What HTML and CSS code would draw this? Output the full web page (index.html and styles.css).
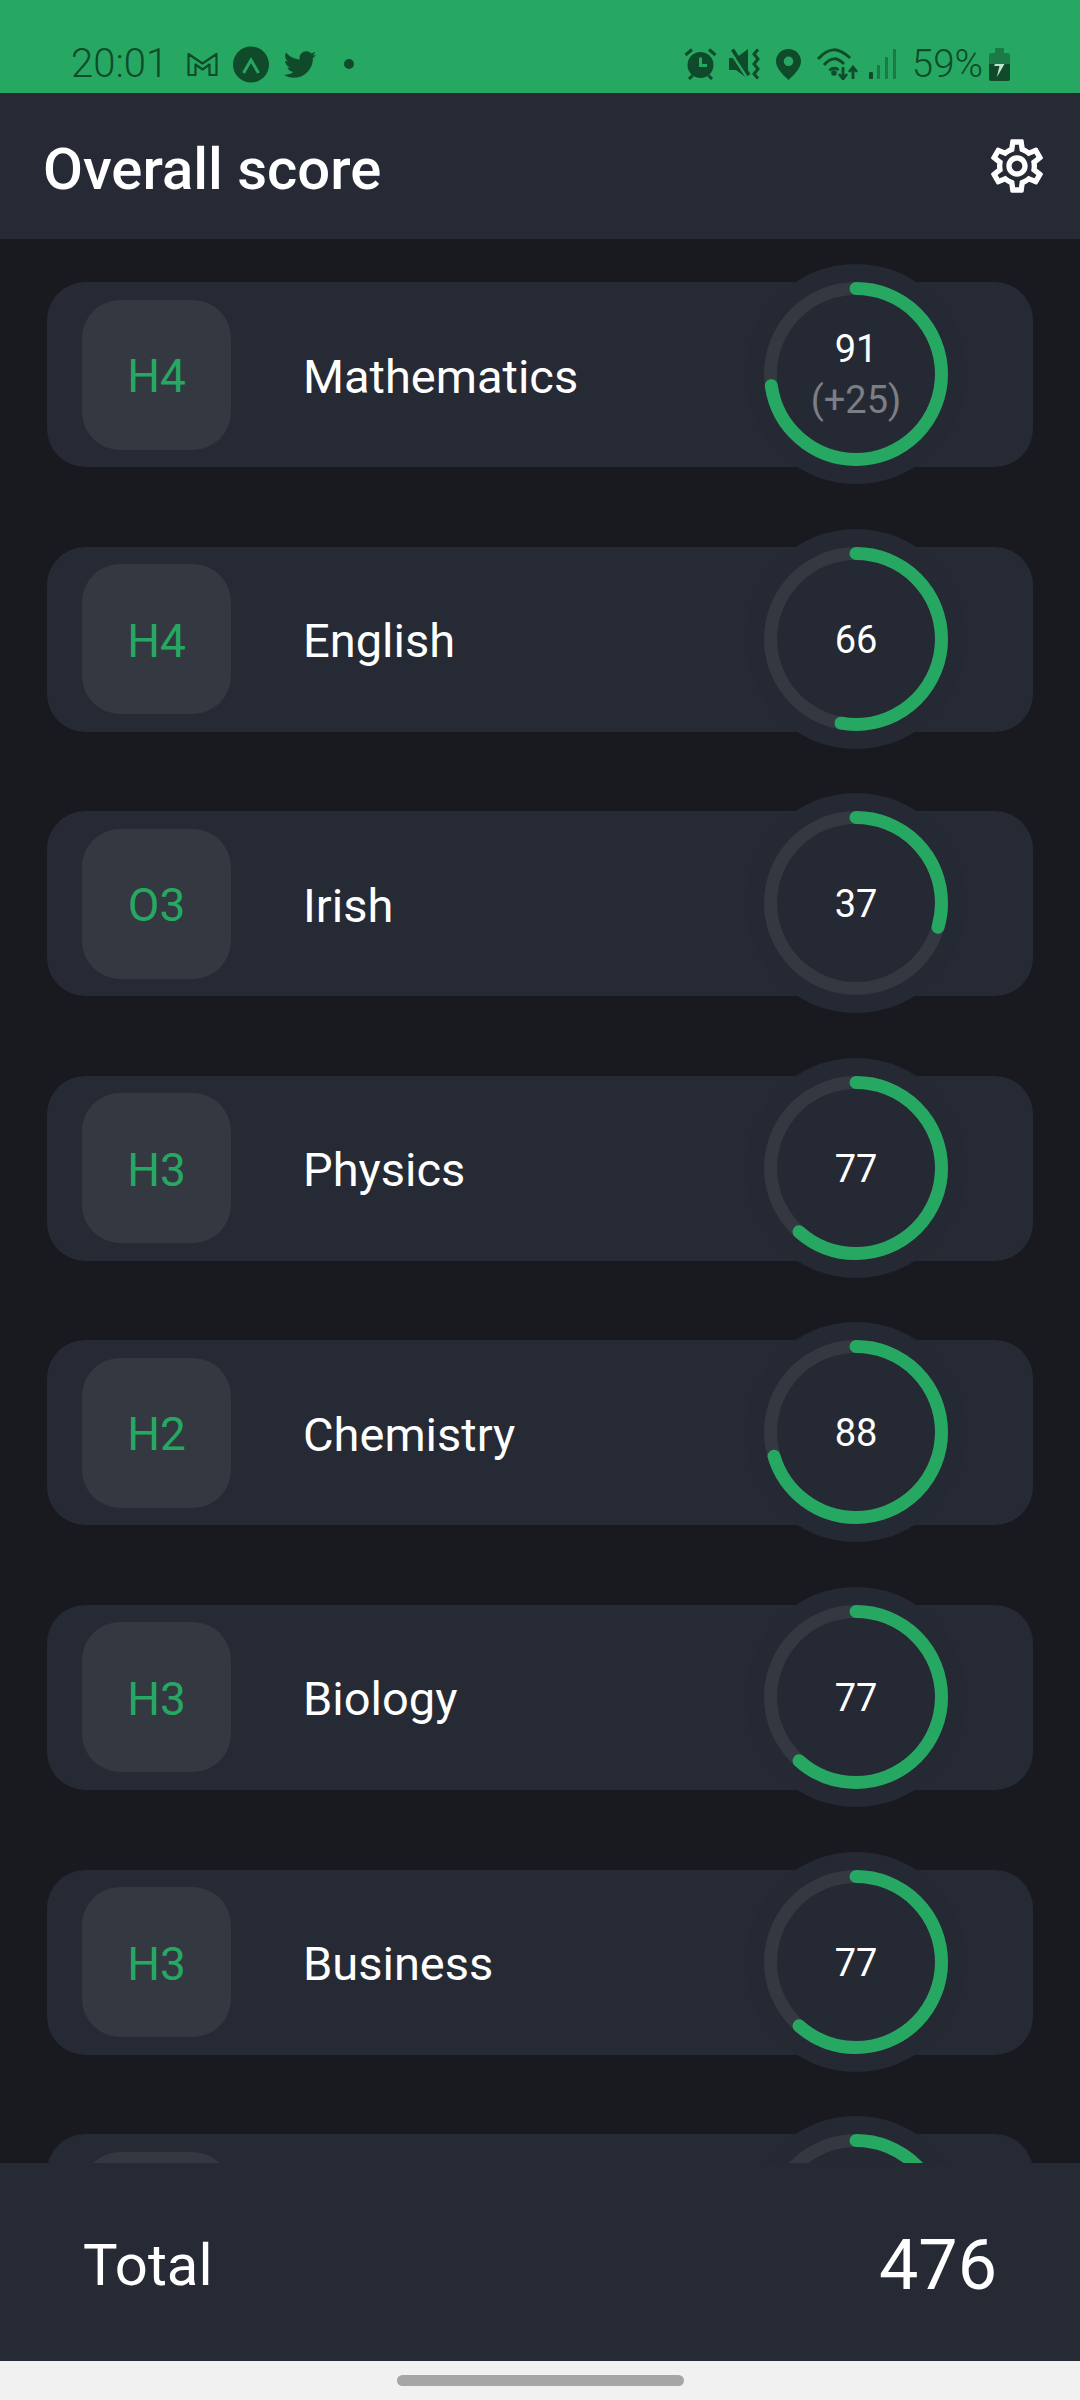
FILE: index.html
```html
<!DOCTYPE html>
<html lang="en">
<head>
    <meta charset="UTF-8">
    <meta name="viewport" content="width=device-width, initial-scale=1.0">
    <title>Overall score</title>
    <link rel="stylesheet" href="styles.css">
</head>
<body>
    <div class="status-bar">
        <div class="status-left">
            <span class="clock">20:01</span>
            <svg class="icon-mail" viewBox="0 0 31 25"><path d="M1.500 2 15.500 11.500 29.500 2V23H22.500V12.500L15.500 17.500 8.500 12.500V23H1.500Z" fill="none" stroke="#0f4a2a" stroke-width="2.200" stroke-linejoin="round"/></svg>
            <svg class="icon-expo" viewBox="0 0 36 37"><circle cx="18" cy="18.500" r="18" fill="#0f4a2a"/><path d="M10.500 27 18 14 25.500 27" fill="none" stroke="#27a862" stroke-width="3"/></svg>
            <svg class="icon-bird" viewBox="1 3.500 22 18"><path fill="#0f4a2a" d="M22.460 6c-.77.35-1.600.58-2.460.69.88-.53 1.560-1.370 1.880-2.380-.83.5-1.750.85-2.720 1.050C18.370 4.500 17.260 4 16 4c-2.350 0-4.270 1.920-4.270 4.290 0 .34.04.67.11.98C8.280 9.090 5.110 7.380 3 4.790c-.37.63-.58 1.370-.58 2.150 0 1.490.75 2.810 1.910 3.560-.71 0-1.370-.2-1.950-.5v.03c0 2.080 1.480 3.820 3.440 4.220a4.190 4.190 0 0 1-1.930.07 4.280 4.280 0 0 0 4 2.980 8.521 8.521 0 0 1-5.330 1.840c-.34 0-.68-.02-1.020-.06C3.440 20.290 5.700 21 8.120 21 16 21 20.330 14.460 20.330 8.790c0-.19 0-.37-.01-.56.84-.6 1.560-1.360 2.140-2.230z"/></svg>
            <span class="dot"></span>
        </div>
        <div class="status-right">
            <svg class="icon-alarm" viewBox="0 0 33 32">
                <circle cx="16.500" cy="17" r="13" fill="#0f4a2a"/>
                <path d="M16.500 9.500V17.500H23" fill="none" stroke="#27a862" stroke-width="3"/>
                <path d="M1.500 7 8 1.500M31.500 7 25 1.500M5 31 8.500 27.500M28 31 24.500 27.500" stroke="#0f4a2a" stroke-width="3" fill="none"/>
            </svg>
            <svg class="icon-mute" viewBox="0 0 32 32">
                <path d="M0 10H7L19 1V31L7 22H0Z" fill="#0f4a2a"/>
                <path d="M1.500 4 19 31" stroke="#27a862" stroke-width="2.500"/>
                <path d="M3.500 1.500 20 27" stroke="#0f4a2a" stroke-width="3.500"/>
                <path d="M29 1.500 25 6 29 11 25 16 29 21 25 26 29 30.500" fill="none" stroke="#0f4a2a" stroke-width="3"/>
            </svg>
            <svg class="icon-pin" viewBox="0 0 25 31"><path fill-rule="evenodd" fill="#0f4a2a" d="M12.500 0C5.600 0 0 5.500 0 12.300 0 19 6.500 25.500 12.500 31 18.500 25.500 25 19 25 12.300 25 5.500 19.400 0 12.500 0ZM12.500 7.500A4.800 4.800 0 1 1 12.500 17.100 4.800 4.800 0 1 1 12.500 7.500Z"/></svg>
            <svg class="icon-wifi" viewBox="0 0 43 32">
                <path d="M2 11C13 -1 22 -1 34 10M8 17C15 9 21 9 28 16M13.500 22.500C16 19.500 20 19.500 22.500 22" fill="none" stroke="#0f4a2a" stroke-width="3"/>
                <circle cx="18" cy="25" r="2.800" fill="#0f4a2a"/>
                <path d="M27 19V30M23 26 27 31 31 26" fill="none" stroke="#0f4a2a" stroke-width="2.800"/>
                <path d="M37 31V20M33 24 37 19 41 24" fill="none" stroke="#0f4a2a" stroke-width="2.800"/>
            </svg>
            <svg class="icon-signal" viewBox="0 0 28 30">
                <rect x="0" y="23" width="4" height="7" rx="1" fill="#0f4a2a"/>
                <rect x="8" y="16" width="3" height="14" rx="1" fill="#1c7a47"/>
                <rect x="16" y="8" width="3" height="22" rx="1" fill="#1c7a47"/>
                <rect x="24" y="0" width="3" height="30" rx="1" fill="#1c7a47"/>
            </svg>
            <span class="percent">59%</span>
            <svg class="icon-battery" viewBox="0 0 21 33">
                <path d="M6 0H15V5H19Q21 5 21 7V16H0V7Q0 5 2 5H6Z" fill="#1c7a47"/>
                <path d="M0 16H21V31Q21 33 19 33H2Q0 33 0 31Z" fill="#0f4a2a"/>
                <path d="M12 6 5.500 18H10.500L7.500 29 15 16H10Z" fill="#1c7a47"/>
                <path d="M6 16H15.500L8 29 10.500 18H5Z" fill="#bfe3cf"/>
            </svg>
        </div>
    </div>

    <div class="app-bar">
        <h1 class="title">Overall score</h1>
        <svg class="icon-gear" viewBox="0 0 24 24"><path fill="#fff" d="M19.430 12.980c.04-.32.07-.64.07-.98 0-.34-.03-.66-.07-.98l2.110-1.650c.19-.15.24-.42.12-.64l-2-3.460c-.09-.16-.26-.25-.44-.25-.06 0-.12.01-.17.03l-2.490 1c-.52-.4-1.080-.73-1.690-.98l-.38-2.650C14.460 2.180 14.250 2 14 2h-4c-.25 0-.46.18-.49.42l-.38 2.650c-.61.25-1.170.59-1.690.98l-2.490-1c-.06-.02-.12-.03-.18-.03-.17 0-.34.09-.43.25l-2 3.460c-.13.22-.07.49.12.64l2.110 1.650c-.04.32-.07.65-.07.98 0 .33.03.66.07.98l-2.110 1.650c-.19.15-.24.42-.12.64l2 3.460c.09.16.26.25.44.25.06 0 .12-.01.17-.03l2.490-1c.52.4 1.080.73 1.690.98l.38 2.650c.03.24.24.42.49.42h4c.25 0 .46-.18.49-.42l.38-2.650c.61-.25 1.170-.59 1.690-.98l2.490 1c.06.02.12.03.18.03.17 0 .34-.09.43-.25l2-3.460c.12-.22.07-.49-.12-.64l-2.110-1.650zm-1.980-1.710c.04.31.05.52.05.73 0 .21-.02.43-.05.73l-.14 1.130.89.7 1.080.84-.7 1.210-1.270-.51-1.040-.42-.9.68c-.43.32-.84.56-1.250.73l-1.060.43-.16 1.130-.2 1.350h-1.400l-.19-1.350-.16-1.130-1.060-.43c-.43-.18-.83-.41-1.230-.71l-.91-.7-1.060.43-1.270.51-.7-1.210 1.080-.84.89-.7-.14-1.130c-.03-.31-.05-.54-.05-.74s.02-.43.05-.73l.14-1.130-.89-.7-1.080-.84.7-1.210 1.270.51 1.040.42.9-.68c.43-.32.84-.56 1.250-.73l1.060-.43.16-1.130.2-1.350h1.390l.19 1.350.16 1.130 1.060.43c.43.18.83.41 1.230.71l.91.7 1.060-.43 1.270-.51.7 1.210-1.070.85-.89.7.14 1.130zM12 8c-2.210 0-4 1.790-4 4s1.790 4 4 4 4-1.790 4-4-1.790-4-4-4zm0 6c-1.100 0-2-.9-2-2s.9-2 2-2 2 .9 2 2-.9 2-2 2z"/></svg>
    </div>

    <div class="score-list">
        <div class="score-card">
            <div class="grade">H4</div>
            <div class="subject">Mathematics</div>
            <div class="ring">
                <svg class="ring-svg" viewBox="0 0 220 220">
                    <circle class="ring-track" cx="110" cy="110" r="85.500"/>
                    <circle class="ring-value" cx="110" cy="110" r="85.500" pathLength="125" stroke-dasharray="91 125"/>
                </svg>
                <span class="points">91</span>
                <span class="bonus">(+25)</span>
            </div>
        </div>
        <div class="score-card">
            <div class="grade">H4</div>
            <div class="subject">English</div>
            <div class="ring">
                <svg class="ring-svg" viewBox="0 0 220 220">
                    <circle class="ring-track" cx="110" cy="110" r="85.500"/>
                    <circle class="ring-value" cx="110" cy="110" r="85.500" pathLength="125" stroke-dasharray="66 125"/>
                </svg>
                <span class="points">66</span>
            </div>
        </div>
        <div class="score-card">
            <div class="grade">O3</div>
            <div class="subject">Irish</div>
            <div class="ring">
                <svg class="ring-svg" viewBox="0 0 220 220">
                    <circle class="ring-track" cx="110" cy="110" r="85.500"/>
                    <circle class="ring-value" cx="110" cy="110" r="85.500" pathLength="125" stroke-dasharray="37 125"/>
                </svg>
                <span class="points">37</span>
            </div>
        </div>
        <div class="score-card">
            <div class="grade">H3</div>
            <div class="subject">Physics</div>
            <div class="ring">
                <svg class="ring-svg" viewBox="0 0 220 220">
                    <circle class="ring-track" cx="110" cy="110" r="85.500"/>
                    <circle class="ring-value" cx="110" cy="110" r="85.500" pathLength="125" stroke-dasharray="77 125"/>
                </svg>
                <span class="points">77</span>
            </div>
        </div>
        <div class="score-card">
            <div class="grade">H2</div>
            <div class="subject">Chemistry</div>
            <div class="ring">
                <svg class="ring-svg" viewBox="0 0 220 220">
                    <circle class="ring-track" cx="110" cy="110" r="85.500"/>
                    <circle class="ring-value" cx="110" cy="110" r="85.500" pathLength="125" stroke-dasharray="88 125"/>
                </svg>
                <span class="points">88</span>
            </div>
        </div>
        <div class="score-card">
            <div class="grade">H3</div>
            <div class="subject">Biology</div>
            <div class="ring">
                <svg class="ring-svg" viewBox="0 0 220 220">
                    <circle class="ring-track" cx="110" cy="110" r="85.500"/>
                    <circle class="ring-value" cx="110" cy="110" r="85.500" pathLength="125" stroke-dasharray="77 125"/>
                </svg>
                <span class="points">77</span>
            </div>
        </div>
        <div class="score-card">
            <div class="grade">H3</div>
            <div class="subject">Business</div>
            <div class="ring">
                <svg class="ring-svg" viewBox="0 0 220 220">
                    <circle class="ring-track" cx="110" cy="110" r="85.500"/>
                    <circle class="ring-value" cx="110" cy="110" r="85.500" pathLength="125" stroke-dasharray="77 125"/>
                </svg>
                <span class="points">77</span>
            </div>
        </div>
        <!-- eighth card is cut off by the footer, only its top shows -->
        <div class="score-card">
            <div class="grade"></div>
            <div class="subject"></div>
            <div class="ring">
                <svg class="ring-svg" viewBox="0 0 220 220">
                    <circle class="ring-track" cx="110" cy="110" r="85.500"/>
                    <circle class="ring-value" cx="110" cy="110" r="85.500" pathLength="125" stroke-dasharray="60 125"/>
                </svg>
            </div>
        </div>
    </div>

    <div class="total-bar">
        <span class="total-label">Total</span>
        <span class="total-value">476</span>
    </div>

    <div class="nav-bar">
        <div class="nav-handle"></div>
    </div>
</body>
</html>
```

FILE: styles.css
```css
html, body {
    margin: 0;
    padding: 0;
}
body {
    width: 1080px;
    height: 2400px;
    display: flex;
    flex-direction: column;
    overflow: hidden;
    font-family: Roboto, "Noto Sans", sans-serif;
    background-color: #191a1f;
    color: #fff;
}

/* status bar */
.status-bar {
    height: 93px;
    flex-shrink: 0;
    box-sizing: border-box;
    padding: 46px 70px 0 71px;
    display: flex;
    justify-content: space-between;
    background-color: #27a862;
    color: #0f4a2a;
}
.status-left, .status-right {
    height: 36px;
    display: flex;
    align-items: center;
}
.clock {
    font-size: 40px;
    line-height: 36px;
    font-weight: 300;
}
.percent {
    margin-left: 15px;
    font-size: 38.5px;
    line-height: 36px;
    font-weight: 300;
}
.icon-mail {
    width: 31px;
    height: 25px;
    margin-left: 19px;
}
.icon-expo {
    width: 36px;
    height: 37px;
    margin-left: 15px;
}
.icon-bird {
    width: 34px;
    height: 29px;
    margin-left: 14px;
}
.dot {
    width: 10px;
    height: 10px;
    margin-left: 27px;
    border-radius: 50%;
    background-color: #0f4a2a;
}
.icon-alarm {
    width: 33px;
    height: 32px;
}
.icon-mute {
    width: 32px;
    height: 32px;
    margin-left: 12px;
}
.icon-pin {
    width: 25px;
    height: 31px;
    margin-left: 15px;
}
.icon-wifi {
    width: 43px;
    height: 32px;
    margin-left: 15px;
}
.icon-signal {
    width: 28px;
    height: 30px;
    margin-left: 10px;
}
.icon-battery {
    width: 21px;
    height: 33px;
    margin-left: 6px;
}

/* app bar */
.app-bar {
    height: 146px;
    flex-shrink: 0;
    box-sizing: border-box;
    padding: 0 31px 0 43px;
    display: flex;
    align-items: center;
    justify-content: space-between;
    background-color: #262a35;
}
.title {
    margin: 6px 0 0 0;
    font-size: 58px;
    font-weight: 500;
}
.icon-gear {
    width: 64px;
    height: 64px;
}

/* list */
.score-list {
    flex: 1;
    min-height: 0;
    overflow: hidden;
    box-sizing: border-box;
    padding: 43px 47px 0 47px;
    display: flex;
    flex-direction: column;
    gap: 79.6px;
}
.score-card {
    height: 185px;
    flex-shrink: 0;
    box-sizing: border-box;
    padding: 0 67px 0 35px;
    display: flex;
    align-items: center;
    background-color: #262a34;
    border-radius: 38px;
}
.grade {
    width: 149px;
    height: 150px;
    flex-shrink: 0;
    box-sizing: border-box;
    padding-top: 3px;
    display: flex;
    align-items: center;
    justify-content: center;
    background-color: #343841;
    border-radius: 38px;
    color: #27a862;
    font-size: 46px;
}
.subject {
    flex: 1;
    margin: 3px 0 0 72px;
    font-size: 47px;
}
.ring {
    width: 220px;
    height: 220px;
    margin: -18px 0 -17px 0;
    flex-shrink: 0;
    box-sizing: border-box;
    padding-top: 2px;
    position: relative;
    display: flex;
    flex-direction: column;
    align-items: center;
    justify-content: center;
    background-color: #252933;
    border-radius: 50%;
}
.ring-svg {
    position: absolute;
    top: 0;
    left: 0;
    width: 220px;
    height: 220px;
    transform: rotate(-90deg);
}
.ring-track, .ring-value {
    fill: none;
    stroke-width: 13;
}
.ring-track {
    stroke: #343841;
}
.ring-value {
    stroke: #27a862;
    stroke-linecap: round;
}
.points {
    font-size: 38px;
    line-height: 50px;
}
.bonus {
    font-size: 38px;
    line-height: 52px;
    color: #7c7e85;
}

/* footer */
.total-bar {
    height: 198px;
    flex-shrink: 0;
    box-sizing: border-box;
    padding: 0 83px 0 83px;
    display: flex;
    align-items: center;
    justify-content: space-between;
    background-color: #262a35;
}
.total-label {
    margin-top: 6px;
    font-size: 58px;
}
.total-value {
    margin-top: 6px;
    font-size: 70px;
}
.nav-bar {
    height: 39px;
    flex-shrink: 0;
    display: flex;
    justify-content: center;
    padding-top: 14px;
    box-sizing: border-box;
    background-color: #f1f1f1;
}
.nav-handle {
    width: 287px;
    height: 11px;
    border-radius: 6px;
    background-color: #a6a6a6;
}
```
